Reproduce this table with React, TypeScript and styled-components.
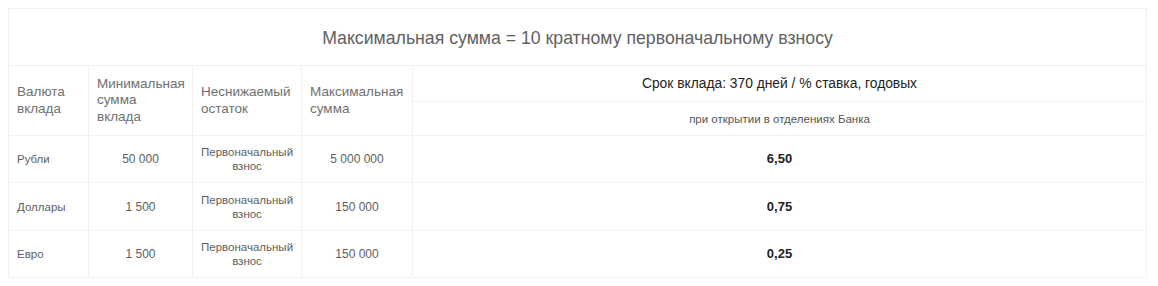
import React from "react";
import styled, { createGlobalStyle } from "styled-components";

const Global = createGlobalStyle`
  body {
    margin: 8px;
    background: #ffffff;
    font-family: "Liberation Sans", Arial, sans-serif;
  }
`;

const Table = styled.table`
  width: 1138px;
  border-collapse: collapse;
  table-layout: fixed;
  border: 1px solid #ececec;
  font-family: "Liberation Sans", Arial, sans-serif;
`;

const Col = styled.col<{ $w: number }>`
  width: ${(p) => p.$w}px;
`;

const TitleCell = styled.th`
  height: 53px;
  padding: 3px 0 0;
  border: 1px solid #efefef;
  font-size: 17.7px;
  font-weight: normal;
  color: #616161;
  text-align: center;
  vertical-align: middle;
`;

const HeadCell = styled.th`
  padding: 0 8px;
  border: 1px solid #f1f1f1;
  font-size: 13.5px;
  line-height: 16.5px;
  font-weight: normal;
  color: #707070;
  text-align: left;
  vertical-align: middle;
`;

const TermCell = styled.th`
  height: 35px;
  padding: 0;
  border: 1px solid #f1f1f1;
  font-size: 13.8px;
  font-weight: normal;
  color: #222;
  text-align: center;
  vertical-align: middle;
`;

const SubCell = styled.th`
  height: 33px;
  padding: 0;
  border: 1px solid #f1f1f1;
  font-size: 11.5px;
  font-weight: normal;
  color: #555;
  text-align: center;
  vertical-align: middle;
`;

const Cell = styled.td<{ $align?: "left" | "center"; $small?: boolean; $bold?: boolean; $h: number }>`
  height: ${(p) => p.$h}px;
  padding: 0 8px;
  border: 1px solid #f1f1f1;
  font-size: ${(p) => (p.$bold ? "13px" : p.$small ? "11.5px" : "12px")};
  line-height: 14px;
  font-weight: ${(p) => (p.$bold ? "bold" : "normal")};
  color: ${(p) => (p.$bold ? "#222" : "#5e5e5e")};
  text-align: ${(p) => p.$align ?? "center"};
  vertical-align: middle;
`;

const rows = [
  { cur: "Рубли", min: "50 000", max: "5 000 000", rate: "6,50", h: 46 },
  { cur: "Доллары", min: "1 500", max: "150 000", rate: "0,75", h: 47 },
  { cur: "Евро", min: "1 500", max: "150 000", rate: "0,25", h: 46 },
];

export default function App() {
  return (
    <>
      <Global />
      <Table>
        <colgroup>
          <Col $w={80} />
          <Col $w={104} />
          <Col $w={109} />
          <Col $w={111} />
          <Col $w={734} />
        </colgroup>
        <thead>
          <tr>
            <TitleCell colSpan={5}>Максимальная сумма = 10 кратному первоначальному взносу</TitleCell>
          </tr>
          <tr>
            <HeadCell rowSpan={2}>Валюта вклада</HeadCell>
            <HeadCell rowSpan={2}>Минимальная сумма вклада</HeadCell>
            <HeadCell rowSpan={2}>Неснижаемый остаток</HeadCell>
            <HeadCell rowSpan={2}>Максимальная сумма</HeadCell>
            <TermCell>Срок вклада: 370 дней / % ставка, годовых</TermCell>
          </tr>
          <tr>
            <SubCell>при открытии в отделениях Банка</SubCell>
          </tr>
        </thead>
        <tbody>
          {rows.map((r) => (
            <tr key={r.cur}>
              <Cell $h={r.h} $align="left" $small>{r.cur}</Cell>
              <Cell $h={r.h}>{r.min}</Cell>
              <Cell $h={r.h} $small>Первоначальный<br />взнос</Cell>
              <Cell $h={r.h}>{r.max}</Cell>
              <Cell $h={r.h} $bold>{r.rate}</Cell>
            </tr>
          ))}
        </tbody>
      </Table>
    </>
  );
}
